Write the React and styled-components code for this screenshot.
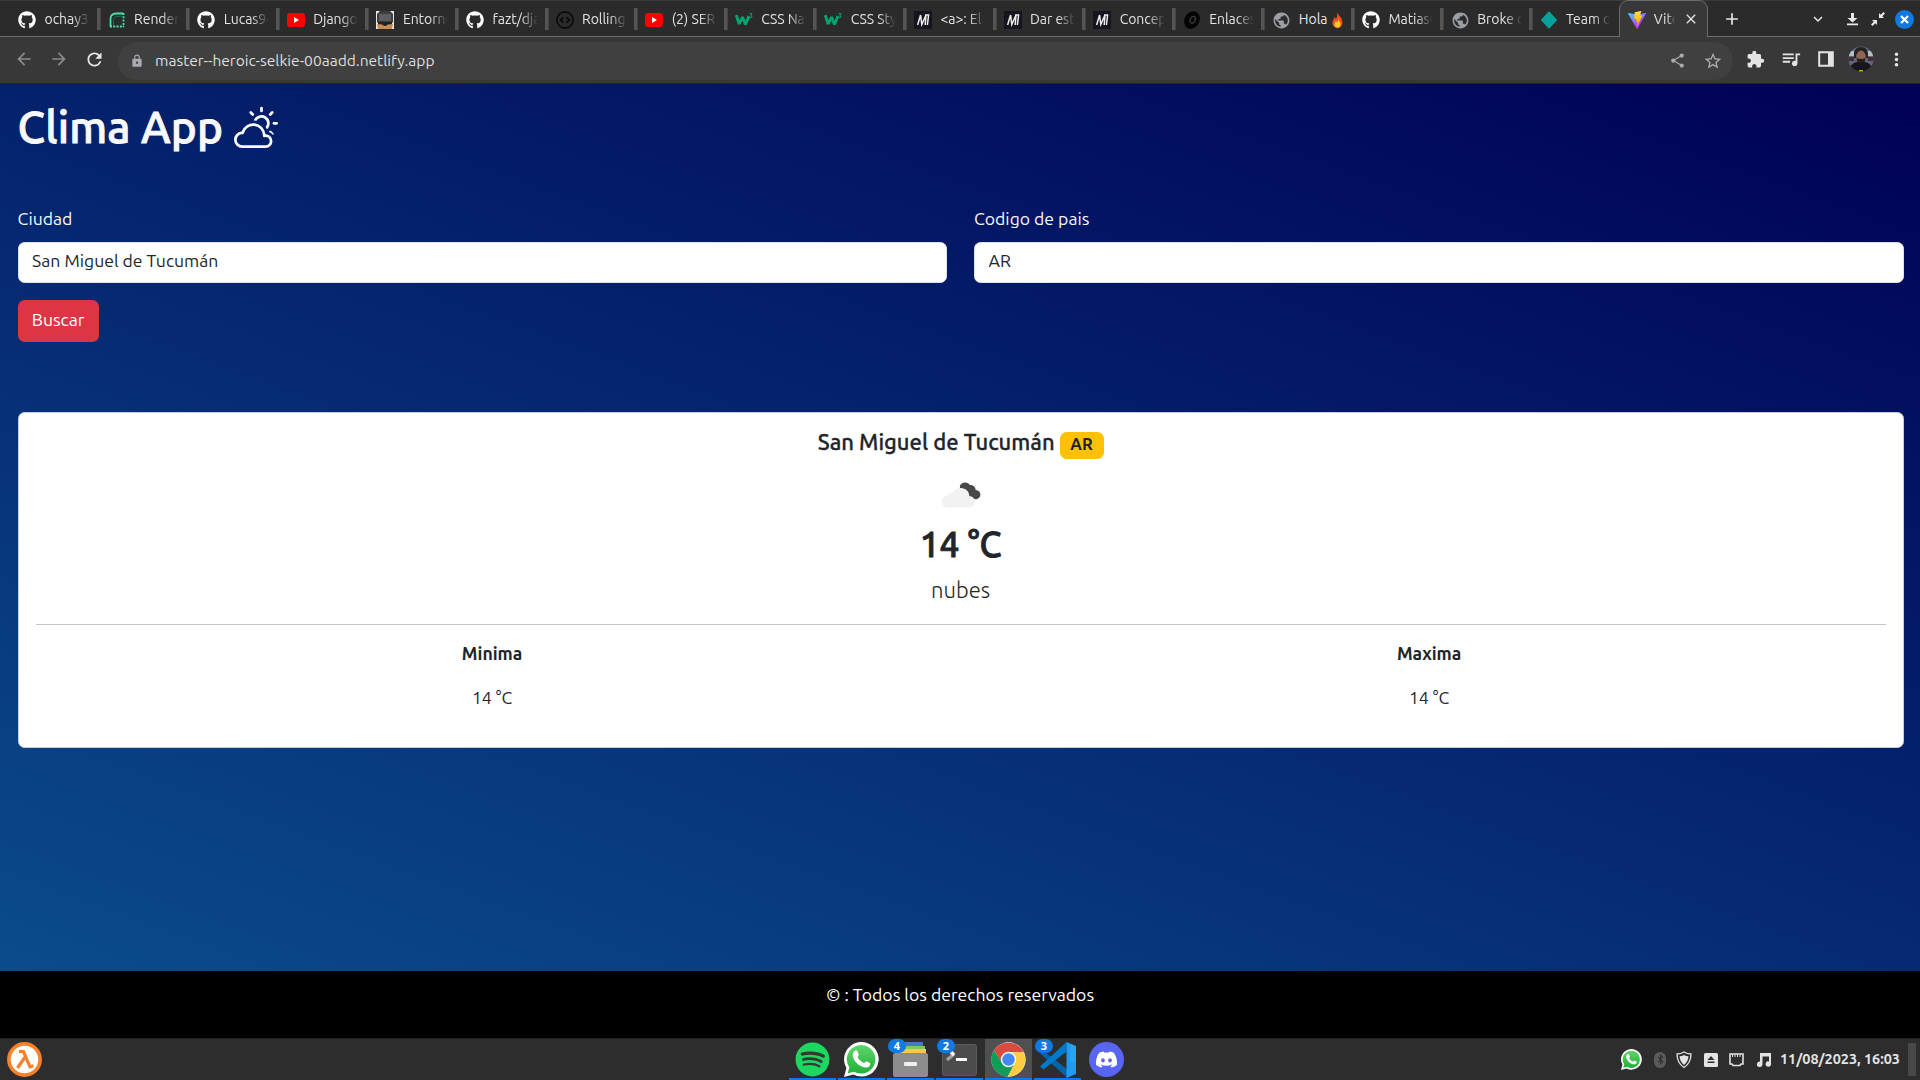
import React from "react";
import styled, { createGlobalStyle, css } from "styled-components";
import { FaSpotify, FaDiscord, FaGithub, FaBluetoothB } from "react-icons/fa";
import { BsCloudSun } from "react-icons/bs";
import { MdArrowBack, MdArrowForward, MdRefresh, MdLock, MdShare, MdStarOutline, MdExtension, MdQueueMusic, MdMoreVert, MdClose, MdAdd, MdExpandMore, MdPublic } from "react-icons/md";

const Global = createGlobalStyle`
  * { box-sizing: border-box; }
  body { margin: 0; background: #2d2d2d; font-family: Ubuntu, "Noto Sans", sans-serif; font-variant-ligatures: no-common-ligatures; }
  svg { display: block; flex: none; }
`;

const Screen = styled.div`
  width: 1920px;
  height: 1080px;
  display: flex;
  flex-direction: column;
  overflow: hidden;
`;

/* ---------- browser tabs ---------- */
const TabStrip = styled.div`
  height: 37px;
  display: flex;
  background: #2b2b2b;
  border-top: 1px solid #3a3a3a;
  padding-left: 9px;
  box-shadow: inset 0 -1px #6c6c6c;
  flex: none;
`;
const Tab = styled.div`
  width: ${(p) => (p.$narrow ? 88.8 : 89.6)}px;
  flex: none;
  display: flex;
  align-items: center;
  padding: 0 9px 0 9px;
  gap: 8.5px;
  color: #e3e3e3;
  position: relative;
  ${(p) => !p.$last && !p.$active && css`
    &::after {
      content: "";
      position: absolute;
      right: -2px;
      top: 7px;
      width: 3px;
      height: 22px;
      background: #555;
      border-right: 1px solid #444;
    }
  `}
  ${(p) => p.$active && css`
    width: 88.5px;
    margin-top: -1px;
    background: #383838;
    border: 1px solid #6c6c6c;
    border-bottom: 0;
    border-radius: 9px 9px 0 0;
    padding-right: 8px;
    padding-left: 8px;
    gap: 7.5px;
  `}
`;
const TabIcon = styled.span`
  width: 18px;
  height: 18px;
  display: grid;
  place-items: center;
  flex: none;
  margin-top: 1px;
`;
const TabTitle = styled.span`
  flex: 1;
  width: 0;
  font-size: 14px;
  letter-spacing: -0.05px;
  line-height: 20px;
  white-space: nowrap;
  overflow: hidden;
  mask-image: ${(p) => (p.$solid ? "none" : "linear-gradient(to right, #000 62%, transparent 100%)")};
`;
const Controls = styled.div`
  flex: 1;
  display: flex;
  align-items: center;
  color: #e8e8e8;
  padding: 0 6px 0 14px;
`;
const Gap = styled.span`flex: ${(p) => (p.$w ? "none" : 1)}; width: ${(p) => p.$w || 0}px;`;
const CloseDot = styled.span`
  width: 19px;
  height: 19px;
  border-radius: 50%;
  background: #1079e2;
  color: #fff;
  display: grid;
  place-items: center;
`;

const Toolbar = styled.div`
  height: 47px;
  flex: none;
  display: flex;
  align-items: center;
  background: #383838;
  border-bottom: 1px solid #252525;
  padding: 0 6px 2px 14px;
  color: #e3e3e3;
`;
const NavIcon = styled.span`
  width: 35px;
  display: flex;
  flex: none;
  color: ${(p) => (p.$dim ? "#8b8b8b" : "#e8e8e8")};
`;
const Omnibox = styled.div`
  width: 1615px;
  flex: none;
  height: 38px;
  margin: 3px 5px 0 -1px;
  border-radius: 19px;
  background: #404040;
  display: flex;
  align-items: center;
  padding: 0 10px 0 12px;
  color: #a9abb0;
`;
const Url = styled.span`
  flex: 1;
  margin-left: 11px;
  color: #dedede;
  font-size: 15.55px;
`;
const Actions = styled.div`
  flex: 1;
  display: grid;
  grid-template-columns: repeat(5, 1fr);
  place-items: center;
`;

/* ---------- page ---------- */
const Page = styled.main`
  height: 887px;
  flex: none;
  padding: 15.6px 16.4px 17.6px 17.6px;
  background: linear-gradient(20deg, #0b4f8c, #000054) 0 0 / 100% 954px;
  color: #f8f9fa;
  font-size: 17.6px;
  line-height: 26.4px;
`;
const Heading = styled.h1`
  margin: 0;
  display: flex;
  align-items: center;
  gap: 11px;
  height: 53px;
  font-size: 44px;
  font-weight: 500;
  letter-spacing: 0.15px;
  line-height: 53px;
  -webkit-text-stroke: 0.9px currentColor;
`;
const Form = styled.form`
  display: grid;
  grid-template-columns: 1fr 1fr;
  gap: 17px 26.8px;
  padding-top: 53px;
`;
const Field = styled.label`
  display: flex;
  flex-direction: column;
  gap: 9.6px;
`;
const Input = styled.input`
  height: 41px;
  border: 1px solid #dee2e6;
  border-radius: 6.6px;
  padding: 0 13px 3px 13.5px;
  font: inherit;
  color: #212529;
  background: #fff;
  outline: none;
`;
const Submit = styled.button`
  width: 81px;
  height: 42px;
  border: 0;
  border-radius: 6.6px;
  background: #dc3545;
  color: #fff;
  font: inherit;
  padding: 0 0 1px;
`;
const Card = styled.section`
  margin-top: 70px;
  height: 336px;
  background: #fff;
  border: 1px solid #c6cbd4;
  border-radius: 6.6px;
  padding: 17px;
  color: #212529;
  display: flex;
  flex-direction: column;
  align-items: center;
`;
const City = styled.h5`
  margin: 0;
  height: 29px;
  display: flex;
  align-items: flex-start;
  gap: 5px;
  font-size: 22px;
  font-weight: 500;
  line-height: 24px;
  -webkit-text-stroke: 0.3px currentColor;
`;
const Badge = styled.span`
  width: 44px;
  height: 27px;
  margin-top: 2px;
  border-radius: 6.6px;
  background: #ffc107;
  text-align: center;
  font-size: 16.5px;
  font-weight: 700;
  line-height: 25px;
  -webkit-text-stroke: 0;
`;
const Temp = styled.div`
  font-size: 35.2px;
  font-weight: 500;
  line-height: 42px;
  margin-top: 8px;
  -webkit-text-stroke: 0.9px currentColor;
`;
const Condition = styled.div`
  font-size: 22px;
  font-weight: 300;
  line-height: 33px;
  margin-top: 8px;
`;
const Rule = styled.hr`
  align-self: stretch;
  border: 0;
  border-top: 1px solid #c4c5c6;
  margin: 18px 0 16px;
`;
const Range = styled.div`
  align-self: stretch;
  display: grid;
  grid-template-columns: 1fr 1fr;
  column-gap: 24px;
  text-align: center;
`;
const Stat = styled.div`
  display: flex;
  flex-direction: column;
  gap: 17.6px;
`;
const Footer = styled.footer`
  height: 67px;
  flex: none;
  background: #000;
  color: #fff;
  text-align: center;
  font-size: 17.6px;
  line-height: 47px;
`;

/* ---------- desktop panel ---------- */
const Taskbar = styled.div`
  height: 42px;
  flex: none;
  display: grid;
  grid-template-columns: 789px auto 1fr;
  background: #2d2d2d;
  border-top: 1px solid #202020;
`;
const Start = styled.div`padding: 3px 7px;`;
const Apps = styled.div`
  display: flex;
  gap: 2px;
`;
const AppSlot = styled.div`
  width: 47px;
  height: 41px;
  display: flex;
  justify-content: center;
  align-items: flex-start;
  padding-top: 3px;
  position: relative;
  background: ${(p) => (p.$active ? "#505050" : "transparent")};
  box-shadow: ${(p) => (p.$idle ? "none" : "inset 0 -2px #1079e2")};
`;
const Count = styled.span`
  position: absolute;
  left: 1px;
  top: 0;
  width: 18px;
  height: 14px;
  border-radius: 7px;
  background: #1079e2;
  color: #fff;
  font-family: "Noto Sans", sans-serif;
  font-size: 11px;
  font-weight: 700;
  line-height: 14px;
  text-align: center;
`;
const Tray = styled.div`
  display: flex;
  align-items: center;
  justify-content: flex-end;
  color: #e3e3e3;
  padding-right: 4px;
`;
const Clock = styled.span`
  width: 120px;
  margin: -1px 0 0 8px;
  font-size: 14.4px;
  font-weight: 700;
  white-space: nowrap;
`;
const ShowDesktop = styled.span`
  width: 8px;
  height: 33px;
  margin-left: 8px;
  background: #484848;
`;

/* ---------- drawings ---------- */
const W3 = () => (
  <svg width="18" height="18" viewBox="0 0 18 18" fill="none" stroke="#04a56d">
    <path d="M1.200 4l3 9L7.500 6l3 7.500L14 5" strokeWidth="2.900" strokeLinejoin="bevel" />
    <path d="M14.500 2.600h2.600l-1.400 1.800q1.800.2 1.200 1.700-.7 1-2.400.2" strokeWidth="1" />
  </svg>
);
const Mdn = () => (
  <svg width="18" height="18" viewBox="0 0 18 18">
    <path fill="#15141f" d="M0 0h18v18H0z" />
    <path d="M3.600 14L6.600 4l1.200 9.500L12 4l-.8 10M11 4h3.600l-1.200 10" fill="none" stroke="#eee" strokeWidth="1.500" />
  </svg>
);
const Render = () => (
  <svg width="16" height="16" viewBox="0 0 16 16" fill="none" stroke="#46e3b0" strokeWidth="1.8">
    <path d="M1.5 15V7q0-5.5 5.5-5.5h7" />
    <path d="M4.5 15V8q0-3.5 3.5-3.5h5" stroke="#1d6653" strokeWidth="1" />
    <path d="M14.5 1v14M1 14.5h14" strokeDasharray="2 1.3" />
  </svg>
);
const YouTube = () => (
  <svg width="18" height="14" viewBox="0 0 18 14">
    <rect width="18" height="14" rx="3" fill="#f00" />
    <path d="M7 4l5 3-5 3z" fill="#fff" />
  </svg>
);
const Robot = () => (
  <svg width="18" height="18" viewBox="0 0 18 18">
    <path fill="#e9e4dc" d="M0 0h18v18H0z" />
    <path fill="#3b3d40" d="M1 3l3-3h10l3 3v8l-3 3H4l-3-3z" />
    <path fill="#5b5e62" d="M3 3h12v7H3z" />
    <path fill="#222" d="M2 11h14v4H2z" />
    <path fill="#c98c56" d="M1 13l5 .5 3 2 3-2 5-.5-1 5H2z" />
  </svg>
);
const Rolling = () => (
  <svg width="18" height="18" viewBox="0 0 18 18" fill="none" stroke="#0a0a0a" strokeWidth="1.700">
    <circle cx="9" cy="9" r="8.100" />
    <path d="M7.500 6.300L4.700 9l2.800 2.700M10.500 6.300L13.300 9l-2.800 2.700" />
  </svg>
);
const Disc = () => (
  <svg width="18" height="18" viewBox="0 0 18 18">
    <ellipse cx="9" cy="9" rx="7.400" ry="9.200" transform="rotate(30 9 9)" fill="#050505" />
    <ellipse cx="9.600" cy="8.500" rx="2.400" ry="3.500" transform="rotate(25 9 9)" fill="#050505" stroke="#3a3a3a" strokeWidth="1.300" />
  </svg>
);
const Diamond = () => (
  <svg width="18" height="18" viewBox="0 0 18 18">
    <path d="M9 1.200L16.200 9 9 16.800 1.800 9z" fill="#05a29b" stroke="#05a29b" strokeWidth="1.500" strokeLinejoin="round" />
  </svg>
);
const Vite = () => (
  <svg width="18" height="18" viewBox="0 0 256 257">
    <defs>
      <linearGradient id="va" x1="0" x2=".58" y1=".02" y2=".8"><stop stopColor="#41d1ff" /><stop offset="1" stopColor="#bd34fe" /></linearGradient>
      <linearGradient id="vb" x1=".43" x2=".5" y1=".02" y2=".89"><stop stopColor="#ffea83" /><stop offset=".08" stopColor="#ffdd35" /><stop offset="1" stopColor="#ffa800" /></linearGradient>
    </defs>
    <path fill="url(#va)" d="M255.15 37.94L134.9 252.98c-2.48 4.44-8.86 4.46-11.38.05L.88 37.96c-2.75-4.82 1.37-10.65 6.83-9.67l120.39 21.52c.76.13 1.55.13 2.32 0l117.87-21.49c5.44-.99 9.58 4.8 6.86 9.62z" />
    <path fill="url(#vb)" d="M185.43.06L96.44 17.5a3.27 3.27 0 0 0-2.63 3.01l-5.48 92.46c-.13 2.18 1.87 3.87 4 3.38l24.77-5.72c2.32-.53 4.42 1.51 3.94 3.84l-7.36 36.04c-.5 2.42 1.78 4.5 4.15 3.78l15.3-4.65c2.37-.72 4.65 1.36 4.15 3.79l-11.7 56.6c-.73 3.54 3.98 5.47 5.94 2.44l1.31-2.03 72.52-144.72c1.21-2.42-.88-5.19-3.55-4.67l-25.5 4.92c-2.4.46-4.44-1.77-3.76-4.11l16.64-57.7c.68-2.34-1.37-4.57-3.75-4.1z" />
  </svg>
);
const InlineFire = styled.svg`
  display: inline-block;
  vertical-align: -4px;
  margin-left: 1px;
`;
const Fire = () => (
  <InlineFire width="11" height="16" viewBox="0 0 12 18">
    <path d="M5.500 0c1 4 5.700 5.500 6 11.500C11.700 15.500 9 18 6 18S.3 15.700.3 12.200C.3 9 2 8.500 2.400 5.500 3.600 6 4 7 4.200 8 5.700 5.500 6 3 5.500 0z" fill="#f4511e" />
    <path d="M6.600 7.500c.5 2.500 3 3.500 2.800 6.200C9.200 16 8 17.500 6 17.500S2.500 16 2.500 14c0-2 1.300-2.300 1.500-3.700 1 .4 1.200 1 1.300 1.700.9-1.200 1.500-2.500 1.300-4.500z" fill="#ffca28" />
  </InlineFire>
);
const Download = () => (
  <svg width="11" height="13" viewBox="0 0 11 13" fill="currentColor"><path d="M4 0h3v5h3.500L5.500 9.500.5 5H4zM0 10.500h11v1.800H0z" /></svg>
);
const Shrink = () => (
  <svg width="14" height="14" viewBox="0 0 14 14" fill="currentColor"><path d="M8 6V1l1.700 1.700L12.500 0 14 1.500l-2.700 2.800L13 6zM6 8v5l-1.700-1.700L1.500 14 0 12.500l2.700-2.800L1 8z" /></svg>
);
const CloseMark = () => (
  <svg width="9" height="9" viewBox="0 0 9 9" stroke="#fff" strokeWidth="2.200"><path d="M1 1l7 7M8 1L1 8" /></svg>
);
const Panel = () => (
  <svg width="16" height="16" viewBox="0 0 16 16"><path d="M1.200 1.200h13.600v13.600H1.200z" fill="none" stroke="#e3e3e3" strokeWidth="2" /><path d="M10 1h5v14h-5z" fill="#e3e3e3" /></svg>
);
const Avatar = () => (
  <svg width="26" height="26" viewBox="0 0 26 26">
    <defs><clipPath id="av"><circle cx="13" cy="13" r="12.500" /></clipPath></defs>
    <g clipPath="url(#av)">
      <path fill="#5d6780" d="M0 0h26v26H0z" />
      <path fill="#b5bdcd" d="M0 5h6v5H0zM19 5h6v5h-6z" />
      <path fill="#4a2b33" d="M0 11h6v4H0zM20 11h6v4h-6z" />
      <path fill="#24211f" d="M6 9q0-8 7-8t7 8v3H6z" />
      <ellipse cx="13" cy="11" rx="4.800" ry="6.500" fill="#8d6655" />
      <path fill="#2a1c18" d="M8.500 12q4.500 2 9 0l-1 5q-3.500 3-7 0z" />
      <path fill="#17161a" d="M1 26q1-9 8-10 4 3 8 0 7 1 8 10z" />
      <path fill="#c9a720" d="M11 24h4v2h-4z" />
    </g>
  </svg>
);
const Weather = () => (
  <svg width="58" height="55" viewBox="0 0 55 55" preserveAspectRatio="none">
    <path fill="#484848" d="M24.500 18.500a5.500 5.500 0 0 1 9.500-.5 5 5 0 0 1 5.500 5 4.600 4.600 0 1 1-2.500 8.500l-5-2-2-3.500-5-2.500z" />
    <path fill="#f2f2f2" d="M13.500 40.500a6 6 0 0 1-.5-12 5 5 0 0 1 5-3 8.200 8.200 0 0 1 15.500 3.500 6 6 0 0 1 1.500 11.500z" />
  </svg>
);
const WeatherSpot = styled.div`
  margin-top: 8px;
  padding-left: 4px;
  height: 48px;
`;
const Lambda = () => (
  <svg width="35" height="35" viewBox="0 0 35 35">
    <circle cx="17.500" cy="17.500" r="15.600" fill="#fff" stroke="#f5822a" strokeWidth="3.700" />
    <path d="M12 9.500h4.500l6.500 15.300 3.500-1M17.700 15.500L10.500 26" fill="none" stroke="#f5822a" strokeWidth="3.200" />
  </svg>
);
const WhatsApp = ({ size }) => (
  <svg width={size} height={size} viewBox="0 0 35 35">
    <defs><linearGradient id="wg" x2="0" y2="1"><stop stopColor="#5fd669" /><stop offset="1" stopColor="#20b038" /></linearGradient></defs>
    <path fill="#fff" d="M0 35l2.400-9A17.300 17.300 0 1 1 9.300 32.600z" />
    <path fill="url(#wg)" d="M3.800 31.200l1.600-5.700A14.300 14.300 0 1 1 10 29.700z" />
    <path fill="#fff" d="M11.300 8.500c.7-.3 1.700-.2 2.100.7l1.300 3.200c.4 1-1.200 2-1.100 2.700 1.300 2.800 3.400 4.700 6.300 5.900.8.300 1.700-2 2.500-1.800l3.500 1.700c.8.400.2 2.500-.6 3.300-2.300 2.100-5 1.700-8.500-.1-3.800-2-6.300-5-7.700-8.600-.9-2.500-.300-5.800 2.200-7z" />
  </svg>
);
const Files = () => (
  <svg width="35" height="35" viewBox="0 0 35 35">
    <path fill="#447bc0" d="M6 0h24v5H6z" /><path fill="#83ca55" d="M4 4h28v4H4z" /><path fill="#fbc550" d="M2 7h31v5H2z" />
    <rect y="11" width="35" height="24" rx="2" fill="#8d8d8d" /><rect x="11" y="20" width="13" height="4" rx="1" fill="#f0f0f0" />
  </svg>
);
const Terminal = () => (
  <svg width="35" height="34" viewBox="0 0 35 34">
    <rect x=".5" y="2.500" width="34" height="31" rx="2" fill="#4c4c4c" stroke="#5c5c5c" />
    <path d="M5 18l7-6" stroke="#a0a0a0" strokeWidth="3.500" /><path d="M9 10l3 3" stroke="#fff" strokeWidth="3.500" /><path d="M14 17.500h11" stroke="#fff" strokeWidth="3" />
  </svg>
);
const Chrome = () => (
  <svg width="35" height="35" viewBox="0 0 48 48">
    <circle cx="24" cy="24" r="23.500" fill="#fff" />
    <path fill="#db4a3f" d="M24 14h20.800A23.500 23.500 0 0 0 4.200 11.300L15 29z" />
    <path fill="#0f9d58" d="M32.700 29L23 47.500A23.500 23.500 0 0 1 4.200 11.300L15.300 29z" />
    <path fill="#ffcd40" d="M24 14h20.800A23.500 23.500 0 0 1 22.800 47.500L32.700 29z" />
    <circle cx="24" cy="24" r="10.600" fill="#f4f4f4" /><circle cx="24" cy="24" r="8.500" fill="#4688f1" />
  </svg>
);
const Code = () => (
  <svg width="36" height="36" viewBox="0 0 36 36">
    <path fill="#0065a9" d="M0 11.500L3.500 9 27 27v8.500z" />
    <path fill="#007acc" d="M0 24.500L26.500 0v9.500L3.500 27.500z" />
    <path fill="#1f9cf0" d="M26.500 0L36 4v28l-9.500 4z" />
    <path fill="#2bb0f7" d="M30 2l6 2.500v15h-6z" opacity=".5" />
  </svg>
);
const DiscordMark = styled.span`
  width: 35px;
  height: 35px;
  border-radius: 50%;
  display: grid;
  place-items: center;
  background: #5865f2;
  color: #fff;
`;
const SpotifyMark = styled.span`
  width: 35px;
  height: 35px;
  border-radius: 50%;
  color: #1ed760;
  background: radial-gradient(#2e3b32 60%, transparent 62%);
`;
const BluetoothMark = styled.span`
  width: 12px;
  height: 16px;
  border-radius: 6px;
  background: #5b5b5b;
  color: #2d2d2d;
  display: grid;
  place-items: center;
  margin-left: 12px;
`;
const TrayGlyphs = styled.svg`margin-left: 10px;`;

const github = <FaGithub size={18} color="#fff" />;
const globe = <MdPublic size={19} color="#9aa0a6" />;
const tabs = [
  [github, "ochay3"],
  [<Render />, "Render"],
  [github, "Lucas94"],
  [<YouTube />, "Django"],
  [<Robot />, "Entorno"],
  [github, "fazt/dja"],
  [<Rolling />, "Rolling"],
  [<YouTube />, "(2) SER"],
  [<W3 />, "CSS Nav"],
  [<W3 />, "CSS Sty"],
  [<Mdn />, "<a>: El"],
  [<Mdn />, "Dar est"],
  [<Mdn />, "Concep"],
  [<Disc />, "Enlaces"],
  [globe, <>Hola <Fire /></>],
  [github, "MatiasG"],
  [globe, "Broke c"],
  [<Diamond />, "Team o"],
];

const apps = [
  { icon: <SpotifyMark><FaSpotify size={35} /></SpotifyMark> },
  { icon: <WhatsApp size={35} /> },
  { icon: <Files />, count: 4 },
  { icon: <Terminal />, count: 2 },
  { icon: <Chrome />, active: true },
  { icon: <Code />, count: 3 },
  { icon: <DiscordMark><FaDiscord size={23} /></DiscordMark>, idle: true },
];

export default function App() {
  return (
    <Screen>
      <Global />
      <TabStrip>
        {tabs.map(([icon, title], i) => (
          <Tab key={i} $last={i === tabs.length - 1} $narrow={i > 14}>
            <TabIcon>{icon}</TabIcon>
            <TabTitle $solid={i === 14}>{title}</TabTitle>
          </Tab>
        ))}
        <Tab $active>
          <TabIcon><Vite /></TabIcon>
          <TabTitle>Vite</TabTitle>
          <MdClose size={16} />
        </Tab>
        <Controls>
          <MdAdd size={20} />
          <Gap />
          <MdExpandMore size={18} />
          <Gap $w={20} />
          <Download />
          <Gap $w={13} />
          <Shrink />
          <Gap $w={10} />
          <CloseDot><CloseMark /></CloseDot>
        </Controls>
      </TabStrip>
      <Toolbar>
        <NavIcon $dim><MdArrowBack size={20} /></NavIcon>
        <NavIcon $dim><MdArrowForward size={20} /></NavIcon>
        <NavIcon><MdRefresh size={21} /></NavIcon>
        <Omnibox>
          <MdLock size={14} />
          <Url>master--heroic-selkie-00aadd.netlify.app</Url>
          <MdShare size={17} />
          <Gap $w={17} />
          <MdStarOutline size={20} />
        </Omnibox>
        <Actions>
          <MdExtension size={19} />
          <MdQueueMusic size={22} />
          <Panel />
          <Avatar />
          <MdMoreVert size={21} />
        </Actions>
      </Toolbar>
      <Page>
        <Heading>Clima App <BsCloudSun size={44} /></Heading>
        <Form onSubmit={(e) => e.preventDefault()}>
          <Field>Ciudad<Input defaultValue="San Miguel de Tucumán" /></Field>
          <Field>Codigo de pais<Input defaultValue="AR" /></Field>
          <Submit>Buscar</Submit>
        </Form>
        <Card>
          <City>San Miguel de Tucumán <Badge>AR</Badge></City>
          <WeatherSpot><Weather /></WeatherSpot>
          <Temp>14 °C</Temp>
          <Condition>nubes</Condition>
          <Rule />
          <Range>
            <Stat><b>Minima</b><span>14 °C</span></Stat>
            <Stat><b>Maxima</b><span>14 °C</span></Stat>
          </Range>
        </Card>
      </Page>
      <Footer>© : Todos los derechos reservados</Footer>
      <Taskbar>
        <Start><Lambda /></Start>
        <Apps>
          {apps.map((a, i) => (
            <AppSlot key={i} $active={a.active} $idle={a.idle}>
              {a.icon}
              {a.count && <Count>{a.count}</Count>}
            </AppSlot>
          ))}
        </Apps>
        <Tray>
          <WhatsApp size={21} />
          <BluetoothMark><FaBluetoothB size={11} /></BluetoothMark>
          <TrayGlyphs width="96" height="18" viewBox="0 0 96 18">
            <path d="M8 1q3 2 7 2 0 9-7 13.500Q1 12 1 3q4 0 7-2z" fill="#2d2d2d" stroke="#e3e3e3" strokeWidth="1.300" />
            <path d="M8 4q2 1.200 4.500 1.300Q12 11 8 14 4 11 3.500 5.300 6 5.200 8 4z" fill="#e3e3e3" />
            <rect x="28" y="2" width="14" height="14" rx="1.500" fill="#e3e3e3" />
            <path d="M35 5l3.500 4h-7zM31.500 10.500h7V12h-7z" fill="#2d2d2d" />
            <path d="M54 3h13v10h-2l-1 1.500h-7L56 13h-2z" fill="none" stroke="#e3e3e3" strokeWidth="1.600" />
            <path d="M56.500 3v3M59 3v3M61.500 3v3M64 3v3" stroke="#e3e3e3" />
            <path d="M84 2H95v11a2.700 2.700 0 1 1-2-2.600V5.500h-6.500V13.500a2.800 2.800 0 1 1-2.500-3z" fill="#e3e3e3" />
          </TrayGlyphs>
          <Clock>11/08/2023, 16:03</Clock>
          <ShowDesktop />
        </Tray>
      </Taskbar>
    </Screen>
  );
}
